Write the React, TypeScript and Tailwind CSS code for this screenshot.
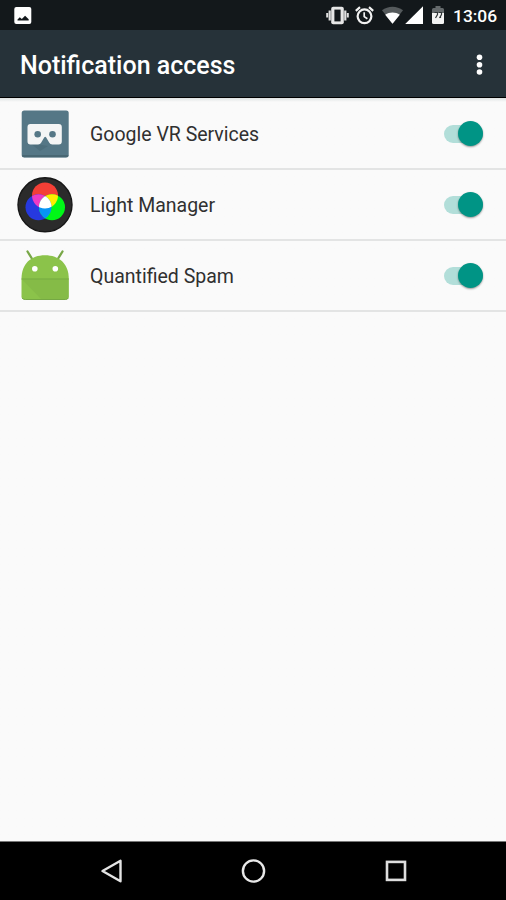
import React from "react";

function StatusBar() {
  return (
    <div className="flex h-[30px] items-center bg-[#13181b] pl-3 pr-[9px] text-white">
      <svg className="h-[22px] w-[22px]" viewBox="0 0 22 22">
        <rect x="2.3" y="3" width="17" height="17" rx="2" fill="#fff" />
        <path d="M5.5 16.5v-1l2.3-2.2 2 1.7 3.3-3.2 3.6 3.5v1.2z" fill="#13181b" />
      </svg>
      <div className="ml-auto flex items-center">
        <svg className="h-[22px] w-6" viewBox="0 0 24 22">
          <rect x="5.2" y="2.8" width="12.6" height="17.4" rx="2" fill="#e6e6e6" />
          <rect x="8.4" y="5.6" width="6.2" height="11.8" fill="#13181b" />
          <path d="M3.700 6.500v10M19.300 6.500v10" stroke="#e0e0e0" strokeWidth="2.200" />
          <path d="M1.200 9v4.600M21.800 9v4.600" stroke="#e0e0e0" strokeWidth="2" />
        </svg>
        <svg className="ml-[5px] h-[22px] w-5" viewBox="0 0 20 22" fill="none" stroke="#f2f2f2">
          <circle cx="9.500" cy="12.300" r="6.900" strokeWidth="2.200" />
          <path d="M.8 6.800 5 3.200M18.200 6.800 14 3.200" strokeWidth="2.200" />
          <path d="M9.200 8.200v4.400l3.200 2.200" strokeWidth="1.700" />
        </svg>
        <svg className="ml-[7px] h-[22px] w-[22px]" viewBox="0 0 22 22">
          <path d="M10.500 19.800 0 6.300C6 1.500 15 1.500 21 6.300z" fill="#555a5c" />
          <path d="M10.500 19.800 3.200 10.700C7.500 7.600 13.500 7.600 17.800 10.700z" fill="#fff" />
        </svg>
        <svg className="ml-[1px] h-[22px] w-[19px]" viewBox="0 0 19 22">
          <path d="M18 2.200v17.800H.2z" fill="#fff" />
        </svg>
        <svg className="ml-[7px] h-[22px] w-[14px]" viewBox="0 0 14 22">
          <path d="M4.500 2h5v2h2q1.500 0 1.500 1.500V9H1V5.500Q1 4 2.500 4h2z" fill="#656a6c" />
          <path d="M1 9h12v9.700q0 1.300-1.500 1.300h-9Q1 20 1 18.700z" fill="#f3f3f3" />
          <path d="M3.500 8.500h3v2l-2 3.500M8 8.500h2.500v2L8.500 14M9.500 12v2" fill="none" stroke="#303638" strokeWidth="1.200" />
        </svg>
        <span className="ml-2 w-11 whitespace-nowrap pt-[2px] text-[17.400px] font-medium leading-5">13:06</span>
      </div>
    </div>
  );
}

function AppBar() {
  return (
    <header className="flex h-[68px] items-center justify-between border-b border-black bg-[#263239] pl-5 pr-[23px] text-white">
      <h1 className="whitespace-nowrap pt-[5px] text-[25px] font-medium leading-8">Notification access</h1>
      <svg className="mt-[2px] h-6 w-[7px]" viewBox="0 0 7 24" fill="#fff">
        <circle cx="3.500" cy="4.300" r="2.800" />
        <circle cx="3.500" cy="11.700" r="2.800" />
        <circle cx="3.500" cy="19" r="2.800" />
      </svg>
    </header>
  );
}

function VrIcon() {
  return (
    <svg className="h-14 w-14" viewBox="0 0 56 56">
      <rect x="4.700" y="4.500" width="47" height="47" rx="2.500" fill="#557786" />
      <path d="M5 49h46.500q0 2.300-2.500 2.300H7.200Q5 51.300 5 49z" fill="#486773" />
      <path d="M13 37 23 45l8-5z" fill="#4b6b79" opacity=".8" />
      <path d="M14.500 18h27.300q3 0 3 3v14.500q0 3-3 3h-6.500q-2.200 0-3-1.700l-3.100-5.300q-1-1.500-2 0l-3.100 5.300q-.8 1.700-3 1.700h-7.600q-3 0-3-3V21q0-3 3-3z" fill="#f4f5f5" />
      <circle cx="20.700" cy="28.300" r="3.300" fill="#557786" />
      <circle cx="35.500" cy="28.300" r="3.300" fill="#557786" />
    </svg>
  );
}

function LightIcon() {
  return (
    <svg className="h-14 w-14" viewBox="0 0 56 56">
      <defs>
        <clipPath id="red"><circle cx="28" cy="18.500" r="13" /></clipPath>
        <clipPath id="blue"><circle cx="21.500" cy="30.300" r="13" /></clipPath>
      </defs>
      <circle cx="28" cy="27.800" r="27" fill="#2b2b2b" stroke="#171717" strokeWidth="1.400" />
      <circle cx="28" cy="18.500" r="13" fill="#f43f36" />
      <circle cx="21.500" cy="30.300" r="13" fill="#2639df" />
      <circle cx="35" cy="30.300" r="13" fill="#00f817" />
      <g clipPath="url(#red)">
        <circle cx="21.500" cy="30.300" r="13" fill="#ed3bc4" />
        <circle cx="35" cy="30.300" r="13" fill="#ffed00" />
      </g>
      <g clipPath="url(#blue)">
        <circle cx="35" cy="30.300" r="13" fill="#0794f5" />
        <g clipPath="url(#red)"><circle cx="35" cy="30.300" r="13" fill="#fff" /></g>
      </g>
    </svg>
  );
}

function AndroidIcon() {
  return (
    <svg className="h-14 w-14" viewBox="0 0 56 56">
      <path d="m10.500 3.500 5 8M45.500 3.500l-5 8" stroke="#78a747" strokeWidth="2.300" strokeLinecap="round" />
      <path d="M4.500 31C4.500 15.500 14 7.200 28 7.200S51.800 15.500 51.800 31z" fill="#8bc34a" />
      <path d="M4.500 31h47.300v17.500q0 3-3 3H7.500q-3 0-3-3z" fill="#8bc34a" />
      <path d="m5 31.500 19 19.500h25q2.700 0 2.700-2.500v-17z" fill="#7dae43" opacity=".4" />
      <path d="M4.500 31h47.300" stroke="#73a940" strokeWidth="1" />
      <path d="M5.200 50q.7 1.500 3 1.500h40q2.500 0 3-1.500" fill="none" stroke="#75a844" />
      <circle cx="17.800" cy="20.800" r="2.800" fill="#fff" />
      <circle cx="38.300" cy="20.800" r="2.800" fill="#fff" />
    </svg>
  );
}

function Toggle() {
  return (
    <div className="flex h-[18px] w-[39px] items-center justify-end rounded-full bg-[#b2ded9]">
      <div className="h-[25px] w-[25px] shrink-0 rounded-full bg-[#009485] shadow-[0_1px_2px_rgba(0,0,0,0.4)]" />
    </div>
  );
}

function Row({ icon, label }: { icon: React.ReactNode; label: string }) {
  return (
    <div className="flex h-[71px] items-center border-b-2 border-[#e3e4e4] pl-[17px] pr-[23px]">
      {icon}
      <span className="ml-[17px] flex-1 whitespace-nowrap pt-0.5 text-[19.500px] leading-6 text-[#303030]">{label}</span>
      <Toggle />
    </div>
  );
}

function NavBar() {
  return (
    <nav className="flex h-[59px] items-center justify-between border-t border-[#777] bg-black pl-[98px] pr-24">
      <svg className="h-7 w-7" viewBox="0 0 28 28" fill="none" stroke="#e4e4e4" strokeWidth="2.400">
        <path d="M22.500 3.800v20.400L4.500 14z" strokeLinejoin="round" />
      </svg>
      <svg className="h-7 w-7" viewBox="0 0 28 28" fill="none" stroke="#e8e8e8" strokeWidth="2.400">
        <circle cx="13.500" cy="14" r="10.600" />
      </svg>
      <svg className="h-7 w-7" viewBox="0 0 28 28" fill="none" stroke="#dedede" strokeWidth="2.600">
        <rect x="5" y="4.900" width="18" height="18" />
      </svg>
    </nav>
  );
}

export default function App() {
  return (
    <div className="flex h-[900px] w-[506px] flex-col overflow-hidden bg-[#fafafa] font-['Roboto',sans-serif]">
      <StatusBar />
      <AppBar />
      <main className="flex-1 bg-linear-to-b from-[#dfe3e3] to-[#fafafa] to-[4px] pt-px">
        <Row icon={<VrIcon />} label="Google VR Services" />
        <Row icon={<LightIcon />} label="Light Manager" />
        <Row icon={<AndroidIcon />} label="Quantified Spam" />
      </main>
      <NavBar />
    </div>
  );
}
